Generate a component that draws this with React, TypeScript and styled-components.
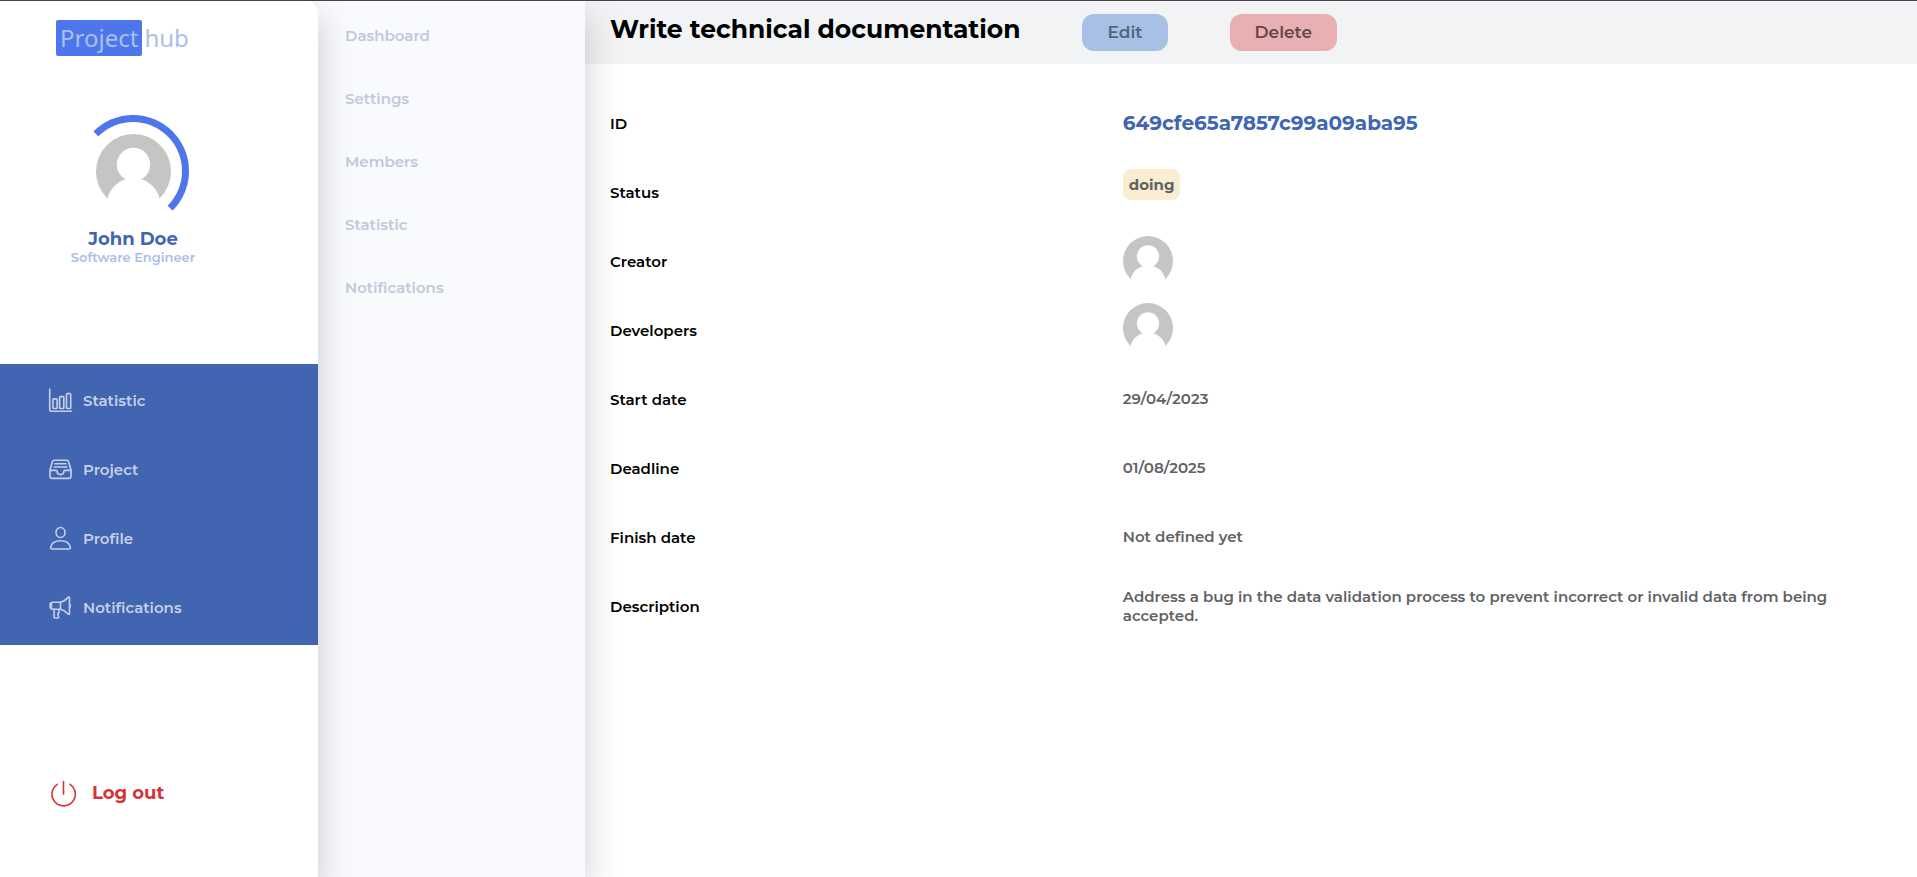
import React from "react";
import styled, { createGlobalStyle } from "styled-components";

const GlobalStyle = createGlobalStyle`
  *, *::before, *::after { box-sizing: border-box; }
  body {
    margin: 0;
    background: #fff;
    color: #000;
    font-family: Montserrat, Inter, "Liberation Sans", sans-serif;
    font-size: 15px;
    line-height: 19px;
  }
  h1, dl, dd, p, ul { margin: 0; padding: 0; }
  ul { list-style: none; }
  a { color: inherit; text-decoration: none; }
`;

const Page = styled.div`
  display: flex;
  min-height: 100vh;
  border-top: 1px solid #45424a;
  overflow: hidden;
`;

const Sidebar = styled.aside`
  position: relative;
  z-index: 2;
  flex: 0 0 318px;
  display: flex;
  flex-direction: column;
  background: #fff;
  border-radius: 0 12px 0 0;
  box-shadow: 0 15px 35px rgba(0, 0, 0, 0.2);
`;

const Logo = styled.a`
  display: flex;
  align-items: center;
  align-self: flex-start;
  gap: 2px;
  margin: 19px 0 0 56px;
  color: #a9c0e8;
  font-family: "Noto Sans", "Open Sans", sans-serif;
  font-size: 24px;
  line-height: 36px;
`;

const LogoMark = styled.span`
  padding: 0 4px;
  border-radius: 2px;
  background: #4e76ec;
`;

const ProfileCard = styled.section`
  display: flex;
  flex-direction: column;
  align-items: center;
  width: 266px;
  margin: 59px 0 99px;
`;

const Ring = styled.div`
  display: flex;
  align-items: center;
  justify-content: center;
  width: 112px;
  height: 112px;
  border: 7px solid #4e76ec;
  border-left-color: transparent;
  border-bottom-color: transparent;
  border-radius: 50%;
`;

const UserName = styled.p`
  margin-top: 2px;
  color: #4165b1;
  font-size: 18px;
  font-weight: 700;
  line-height: 20px;
`;

const UserRole = styled.p`
  color: #a9c0e8;
  font-size: 13px;
  font-weight: 600;
  line-height: 16px;
`;

const MainNav = styled.nav`
  padding: 2px 0 3px 48px;
  background: #4165b1;
  color: #c6d0e8;
`;

const MainLink = styled.a`
  display: flex;
  align-items: center;
  gap: 10px;
  height: 69px;
  font-weight: 600;
`;

const LogOut = styled.button`
  display: flex;
  align-items: center;
  align-self: flex-start;
  gap: 15px;
  margin: 134px 0 24px 50px;
  padding: 0;
  border: 0;
  background: none;
  color: #d43434;
  font: inherit;
  font-size: 18px;
  font-weight: 700;
  line-height: 28px;
  cursor: pointer;
`;

const SubNav = styled.nav`
  position: relative;
  z-index: 1;
  flex: 0 0 267px;
  padding: 25px 27px;
  background: #f8fafe;
  box-shadow: 0 15px 35px rgba(0, 0, 0, 0.2);
  color: #c3c8d8;
  font-weight: 600;

  ul {
    display: grid;
    gap: 43px;
  }
  li { height: 20px; }
`;

const Main = styled.main`
  flex: 1;
  min-width: 0;
`;

const TitleBar = styled.header`
  display: flex;
  align-items: flex-start;
  gap: 62px;
  padding: 13px 25px;
  background: #f1f3f5;
`;

const Title = styled.h1`
  font-size: 25px;
  font-weight: 700;
  line-height: 30px;
`;

const ActionButton = styled.button<{ $tone: "edit" | "delete" }>`
  height: 37px;
  padding: 0 25px;
  border: 0;
  border-radius: 12px;
  background: ${(p) => (p.$tone === "edit" ? "#a8c0e5" : "#e8b0b2")};
  color: ${(p) => (p.$tone === "edit" ? "#54647f" : "#67474a")};
  font: inherit;
  font-size: 17px;
  font-weight: 600;
  cursor: pointer;
`;

const Details = styled.dl`
  padding: 24px 25px;
`;

const Row = styled.div`
  display: grid;
  grid-template-columns: 2fr 3fr;
  align-items: center;
  height: 69px;
`;

const Label = styled.dt`
  padding-top: 2px;
  font-weight: 600;
`;

const Value = styled.dd`
  display: flex;
  color: #606163;
  font-weight: 600;
`;

const TaskId = styled.span`
  color: #4165b1;
  font-size: 20px;
  font-weight: 700;
  line-height: 24px;
`;

const StatusTag = styled.span`
  margin-bottom: 15px;
  padding: 6px;
  border-radius: 8px;
  background: #f9eecf;
  font-weight: 700;
`;

const AvatarList = styled.div`
  display: flex;
  gap: 8px;
  padding-bottom: 4px;
`;

const Avatar = ({ size }: { size: number }) => (
  <svg width={size} height={size} viewBox="0 0 75 75" role="img" aria-label="User avatar">
    <circle cx="37.5" cy="37.5" r="37.5" fill="#c5c5c5" />
    <circle cx="37.5" cy="71" r="27" fill="#fff" />
    <circle cx="37.5" cy="30.5" r="16.7" fill="#fff" />
  </svg>
);

const Icon = ({ children, size = 25 }: { children: React.ReactNode; size?: number }) => (
  <svg
    width={size}
    height={size}
    viewBox={`0 0 ${size} ${size}`}
    fill="none"
    stroke="currentColor"
    strokeWidth="1.6"
    strokeLinecap="round"
    strokeLinejoin="round"
    aria-hidden="true"
  >
    {children}
  </svg>
);

const ChartIcon = () => (
  <Icon>
    <path d="M1.7 1v20.5q0 1.8 1.8 1.8H23.5" />
    <rect x="4.9" y="10.9" width="4.2" height="9.6" rx="0.8" />
    <rect x="11.6" y="8.6" width="4.2" height="11.9" rx="0.8" />
    <rect x="18.5" y="5.6" width="4.2" height="14.9" rx="0.8" />
  </Icon>
);

const InboxIcon = () => (
  <Icon>
    <path d="M2 13 4.4 4.8q.4-1.6 2-1.6h12.2q1.6 0 2 1.6L23 13v6.2q0 2.2-2.2 2.2H4.2Q2 21.4 2 19.2Z" />
    <path d="M2 13.4h6.2q.9 0 .9 1.2a3.4 3 0 0 0 6.8 0q0-1.2.9-1.2H23M7 6.7h11M6.2 10h12.6" />
  </Icon>
);

const PersonIcon = () => (
  <Icon>
    <ellipse cx="12.5" cy="6.5" rx="4.5" ry="5" />
    <path d="M4.2 23h16.6q1.7 0 1.5-1.7C21.5 17.1 17.5 14.8 12.5 14.8S3.5 17.1 2.7 21.3q-.2 1.7 1.5 1.7Z" />
  </Icon>
);

const MegaphoneIcon = () => (
  <Icon>
    <path d="M12.5 7.2H4.2q-.7 0-.7 1v5q0 1 .7 1h8.3q3.8.7 7.3 4.6.9.7 1.7 0V2.6q-.8-.9-1.7 0-3.5 4-7.3 4.6Z" />
    <path d="M12.5 7.2v7M3.5 7.9q-1.5 0-1.5 2.9t1.5 2.9M21.5 9q1.6 1.9 0 3.8M6.1 14.2v7.9q0 .9.9.9h2.7q1 0 .9-1l-.8-3.5 1-.4.3-3.9" />
  </Icon>
);

const PowerIcon = () => (
  <Icon size={27}>
    <path d="M7.3 4.3A11.7 11.7 0 1 0 20 4.3M13.5 1.6v12.5" />
  </Icon>
);

const mainLinks = [
  { label: "Statistic", icon: <ChartIcon /> },
  { label: "Project", icon: <InboxIcon /> },
  { label: "Profile", icon: <PersonIcon /> },
  { label: "Notifications", icon: <MegaphoneIcon /> },
];

const subLinks = ["Dashboard", "Settings", "Members", "Statistic", "Notifications"];

const details: { label: string; value: React.ReactNode }[] = [
  { label: "ID", value: <TaskId>649cfe65a7857c99a09aba95</TaskId> },
  { label: "Status", value: <StatusTag>doing</StatusTag> },
  { label: "Creator", value: <Avatar size={50} /> },
  {
    label: "Developers",
    value: (
      <AvatarList>
        <Avatar size={50} />
      </AvatarList>
    ),
  },
  { label: "Start date", value: "29/04/2023" },
  { label: "Deadline", value: "01/08/2025" },
  { label: "Finish date", value: "Not defined yet" },
  {
    label: "Description",
    value:
      "Address a bug in the data validation process to prevent incorrect or invalid data from being accepted.",
  },
];

export default function App() {
  return (
    <>
      <GlobalStyle />
      <Page>
        <Sidebar>
          <Logo href="#home">
            <LogoMark>Project</LogoMark>
            <span>hub</span>
          </Logo>
          <ProfileCard>
            <Ring>
              <Avatar size={75} />
            </Ring>
            <UserName>John Doe</UserName>
            <UserRole>Software Engineer</UserRole>
          </ProfileCard>
          <MainNav aria-label="Main">
            <ul>
              {mainLinks.map(({ label, icon }) => (
                <li key={label}>
                  <MainLink href={`#${label.toLowerCase()}`}>
                    {icon}
                    {label}
                  </MainLink>
                </li>
              ))}
            </ul>
          </MainNav>
          <LogOut type="button">
            <PowerIcon />
            Log out
          </LogOut>
        </Sidebar>
        <SubNav aria-label="Project">
          <ul>
            {subLinks.map((label) => (
              <li key={label}>
                <a href={`#project-${label.toLowerCase()}`}>{label}</a>
              </li>
            ))}
          </ul>
        </SubNav>
        <Main>
          <TitleBar>
            <Title>Write technical documentation</Title>
            <ActionButton type="button" $tone="edit">Edit</ActionButton>
            <ActionButton type="button" $tone="delete">Delete</ActionButton>
          </TitleBar>
          <Details>
            {details.map(({ label, value }) => (
              <Row key={label}>
                <Label>{label}</Label>
                <Value>{value}</Value>
              </Row>
            ))}
          </Details>
        </Main>
      </Page>
    </>
  );
}
